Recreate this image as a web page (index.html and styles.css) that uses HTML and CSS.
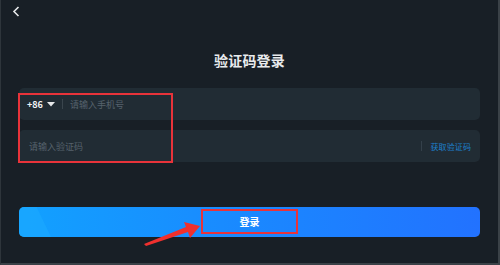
FILE: index.html
```html
<!DOCTYPE html>
<html lang="zh">
<head>
<meta charset="utf-8">
<link rel="stylesheet" href="styles.css">
</head>
<body>
<div class="page">
  <div class="topbar">
    <svg class="back" width="8" height="11" viewBox="0 0 8 11"><path d="M6.5 1 L2 5.5 L6.5 10" fill="none" stroke="#e6e8ea" stroke-width="1.6"/></svg>
  </div>
  <h1 class="title">验证码登录</h1>
  <div class="form">
    <div class="field">
      <span class="code">+86</span>
      <svg class="caret" width="8" height="5" viewBox="0 0 8 5"><path d="M0 0 H8 L4 4.5 Z" fill="#e6e8ea"/></svg>
      <span class="sep"></span>
      <span class="ph">请输入手机号</span>
    </div>
    <div class="field">
      <span class="ph ph-grow">请输入验证码</span>
      <span class="sep sep-dark"></span>
      <span class="link">获取验证码</span>
    </div>
    <div class="mark mark-fields"></div>
    <div class="btn">
      <span class="btn-deco"></span>
      <span class="btn-text">登录</span>
      <span class="mark mark-btn"></span>
    </div>
    <svg class="arrow" width="70" height="40" viewBox="0 0 70 40"><polygon points="2,37 44,20 42,15 58,19 48,31 46,25 4,39" fill="#f0302e"/></svg>
  </div>
</div>
</body>
</html>
```
FILE: styles.css
```css
* { box-sizing: border-box; margin: 0; padding: 0; }
html, body { width: 500px; height: 265px; }
body {
  background: #181f26;
  font-family: "Noto Sans CJK SC", "Noto Sans", sans-serif;
  overflow: hidden;
}
.page {
  width: 500px;
  height: 265px;
  border-left: 1px solid #2e353b;
  border-right: 2px solid #3a4147;
  border-bottom: 2px solid #3a4147;
  display: flex;
  flex-direction: column;
}
.topbar {
  height: 50px;
  padding: 6px 0 0 11px;
}
.back { display: block; }
.title {
  font-size: 14px;
  line-height: 20px;
  font-weight: 700;
  color: #e9ebed;
  text-align: center;
  letter-spacing: 0.2px;
}
.form {
  position: relative;
  margin-top: 18px;
  padding: 0 18px;
  display: flex;
  flex-direction: column;
  gap: 10px;
}
.field {
  height: 32px;
  background: #212c34;
  border-radius: 5px;
  display: flex;
  align-items: center;
  padding: 0 9px 0 9px;
  font-size: 9px;
}
.code {
  color: #f1f3f5;
  font-weight: 700;
  font-size: 9px;
  margin-left: -1px;
}
.caret { margin-left: 4px; margin-right: 7px; }
.sep {
  width: 1px;
  height: 10px;
  background: #3a454d;
  margin-right: 7px;
}
.sep-dark { margin-right: 9px; background: #34404a; }
.ph { color: #56626c; }
.ph-grow { flex: 1; margin-left: 1px; }
.link { color: #1d80cc; font-size: 8px; letter-spacing: 0.1px; }
.btn {
  position: relative;
  margin-top: 35px;
  height: 30px;
  border-radius: 5px;
  background: linear-gradient(90deg, #12a1ff 0%, #1a88ff 50%, #2272ff 100%);
  display: flex;
  align-items: center;
  justify-content: center;
}
.btn-deco {
  position: absolute;
  left: 0;
  top: 0;
  width: 32px;
  height: 30px;
  border-radius: 5px 0 0 5px;
  background: #1caaff;
  clip-path: polygon(0 0, 55% 0, 100% 100%, 0 100%);
  opacity: 0.6;
}
.btn-text {
  color: #ffffff;
  font-size: 10px;
  font-weight: 700;
  line-height: 14px;
}
.mark {
  position: absolute;
  border: 2px solid #e8333a;
}
.mark-fields {
  left: 17px;
  top: 5px;
  width: 155px;
  height: 70px;
}
.mark-btn {
  left: 182px;
  top: 2px;
  width: 97px;
  height: 25px;
}
.arrow {
  position: absolute;
  left: 141px;
  top: 119px;
}
```
